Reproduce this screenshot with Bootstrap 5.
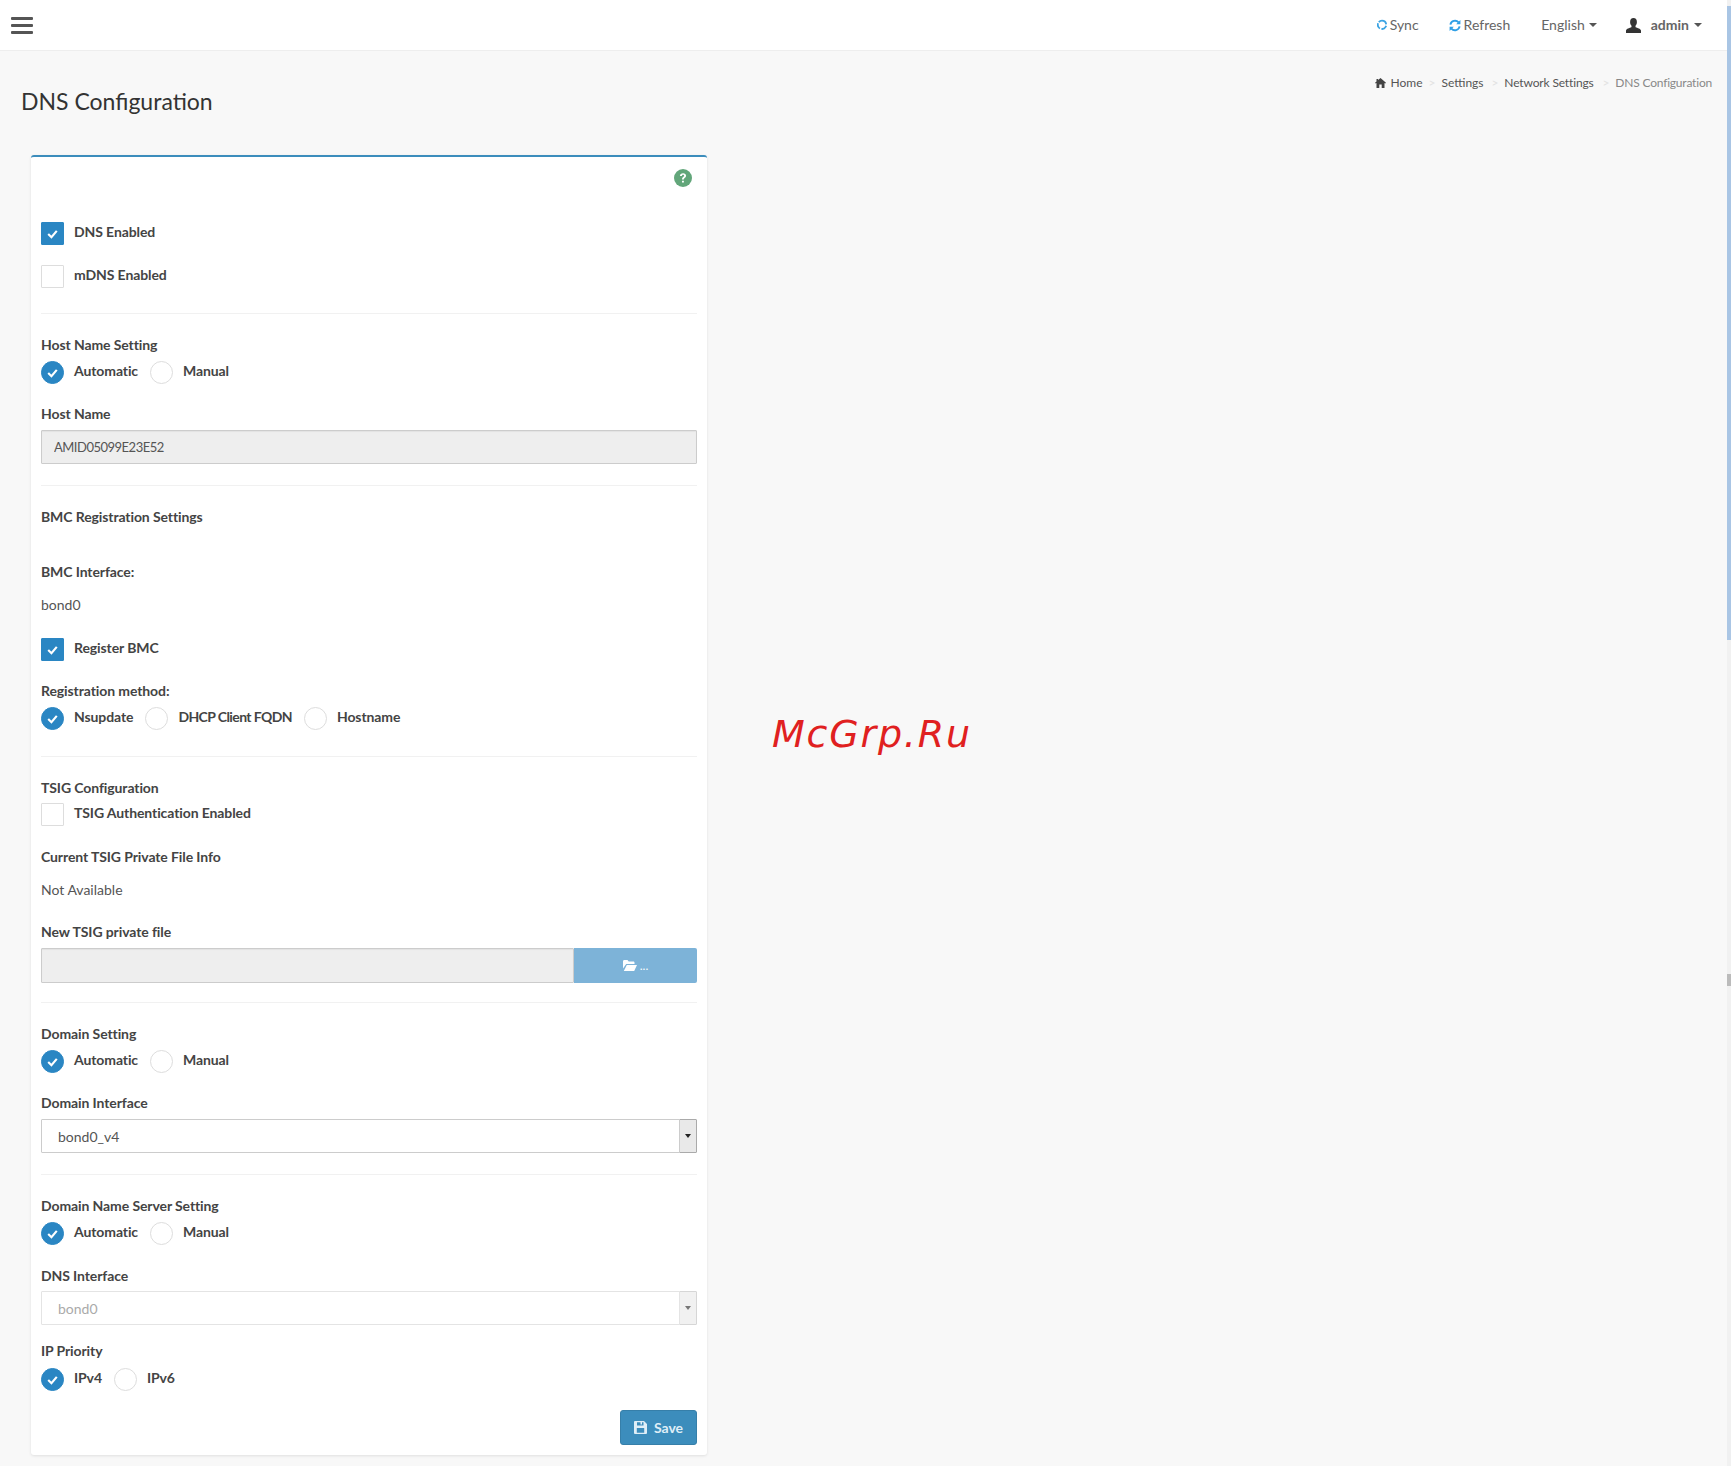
<!DOCTYPE html>
<html lang="en">
<head>
<meta charset="utf-8">
<title>DNS Configuration</title>
<link href="https://cdn.jsdelivr.net/npm/bootstrap@5.3.0/dist/css/bootstrap.min.css" rel="stylesheet">
<style>
html,body{height:1466px;overflow:hidden}
body{background:#f8f8f8;font-family:"Lato","Liberation Sans",sans-serif;font-size:14px;color:#444;line-height:20px;position:relative}
.topbar{height:51px;background:#fff;border-bottom:1px solid #eee;padding:0 29px 0 11px}
.burger{display:flex;flex-direction:column;gap:4px;width:22px;padding:0;border:0;background:none}
.burger i{display:block;height:3px;background:#555;border-radius:1px}
.topitem{color:#666;font-size:14px;text-decoration:none;display:flex;align-items:center;gap:3px;line-height:20px;padding:0}
.topitem.ms1{margin-left:30px}
.topitem.ms2{margin-left:31px}
.topitem.ms3{margin-left:29px;gap:8px;font-weight:700}
.useric{margin-right:2px}
.caretdn{display:inline-block;width:0;height:0;border-left:4px solid transparent;border-right:4px solid transparent;border-top:4px solid #555;margin-left:1px}
.headrow{padding:0 19px 0 21px}
.pagetitle{font-size:23px;line-height:30px;font-weight:400;color:#333;margin:35px 0 0}
.crumbs{--bs-breadcrumb-margin-bottom:0;--bs-breadcrumb-item-padding-x:6px;--bs-breadcrumb-divider:'>';--bs-breadcrumb-divider-color:#e2e2e2;--bs-breadcrumb-item-active-color:#888;font-size:12px;line-height:18px;margin-top:23px}
.crumbs a{color:#555;text-decoration:none}
.crumbs .active{letter-spacing:-.2px;padding-left:9px}
.crumbs .crumbwide{padding-left:8px;letter-spacing:-.15px}
.formcard{width:676px;margin:39px 0 0 31px;border:0;border-top:2px solid #3c8dbc;border-radius:3px;box-shadow:0 1px 3px rgba(0,0,0,.1);background:#fff;padding:10px}
.helprow{height:22px;padding-right:5px}
.flabel{display:block;margin:0;font-weight:700;color:#444;line-height:20px;letter-spacing:-.1px}
.fval{margin:0;color:#555;line-height:20px}
.optrow{display:flex;align-items:flex-start;min-height:23px}
.optrow .form-check-input{flex:none;margin:0;width:23px;height:23px;border:1px solid #ddd;background-color:#fff;box-shadow:none}
.optrow .form-check-input[type=checkbox]{border-radius:1px}
.optrow .form-check-input[type=radio]{border-radius:50%}
.optrow .form-check-input:checked{background-color:#2a86c3;border-color:#2a86c3;background-size:15px 15px;background-position:center;background-image:url("data:image/svg+xml,%3csvg xmlns='http://www.w3.org/2000/svg' viewBox='0 0 14 14'%3e%3cpath fill='none' stroke='%23fff' stroke-width='2' d='M3 7.5l3 3 5-6'/%3e%3c/svg%3e")}
.optrow label{margin:0 12px 0 10px;font-weight:700;color:#444;line-height:20px;letter-spacing:-.1px}
.optrow label.tightcaps{letter-spacing:-.6px}
.sep{margin:0;border:0;border-top:1px solid #f1f1f1;opacity:1}
.gt5{margin-top:5px}.gt6{margin-top:6px}.gt7{margin-top:7px}.gt13{margin-top:13px}.gt16{margin-top:16px}.gt19{margin-top:19px}.gt20{margin-top:20px}.gt21{margin-top:21px}.gt22{margin-top:22px}.gt23{margin-top:23px}.gt25{margin-top:25px}.gt26{margin-top:26px}.gt33{margin-top:33px}.gt35{margin-top:35px}
.hostinput{height:34px;border:1px solid #ccc;border-radius:1px;padding:0 12px;font-size:13px;letter-spacing:-.5px;color:#555;box-shadow:inset 0 1px 1px rgba(0,0,0,.05)}
.hostinput:disabled,.hostinput[readonly]{background:#eee;opacity:1}
.fileinput{height:35px;min-width:0}
.browsebtn{flex:none;width:123px;height:35px;border:0;border-radius:0 2px 2px 0;background:#7db3d8;color:#fff;display:flex;align-items:center;justify-content:center;gap:3px;padding:0;font-size:12px;opacity:1}
.selwrap{height:34px;flex-wrap:nowrap}
.selwrap .form-select{height:34px;border:1px solid #ccc;border-radius:1px 0 0 1px;padding:0 16px;font-size:14px;color:#555;background-image:none;box-shadow:none}
.selwrap .form-select:disabled{background-color:#fff;color:#aaa;border-color:#e4e4e4;opacity:1}
.selarrow{width:18px;flex:none;display:flex;align-items:center;justify-content:center;background:#e9e9e9;border:1px solid #aaa;border-radius:0 1px 1px 0;margin-left:-1px}
.selarrow i{width:0;height:0;border-left:3.5px solid transparent;border-right:3.5px solid transparent;border-top:4px solid #222}
.selarrow.off{border-color:#d6d6d6;background:#f1f1f1}
.selarrow.off i{border-top-color:#777}
.savebtn{--bs-btn-bg:#3c8dbc;--bs-btn-border-color:#367fa9;--bs-btn-color:#dfeef7;width:77px;height:35px;border-radius:3px;font-size:14px;font-weight:700;padding:0;display:flex;align-items:center;justify-content:center;gap:7px}
.wmark{position:absolute;left:772px;top:712px;font-family:"DejaVu Sans",sans-serif;font-style:italic;font-size:38px;line-height:44px;letter-spacing:1.8px;color:#e02020}
.sbtrack{position:absolute;right:0;top:0;width:4px;height:1466px;background:#f1f1f1}
.sbthumb{position:absolute;left:0;top:6px;width:4px;height:634px;background:#a9c5e4}
.sbmark{position:absolute;left:0;top:974px;width:4px;height:12px;background:#bbb}
</style>
</head>
<body>
<nav class="navbar topbar d-flex align-items-center justify-content-between flex-nowrap">
  <button class="burger" type="button" aria-label="Menu"><i></i><i></i><i></i></button>
  <div class="d-flex align-items-center">
    <a class="topitem" href="#"><svg width="10" height="12" viewBox="0 0 10 12"><path d="M5 1.6a4.2 4.2 0 1 1-.01 0" fill="none" stroke="#3aa3e3" stroke-width="1.8" stroke-dasharray="6 1.4"/></svg>Sync</a>
    <a class="topitem ms1" href="#"><svg width="12" height="13" viewBox="0 0 12 13"><path d="M1.4 5.6A4.7 4.7 0 0 1 9.6 3.4M10.6 7.4A4.7 4.7 0 0 1 2.4 9.6" fill="none" stroke="#2f9fe6" stroke-width="1.9"/><path d="M11.4 1v4.2H7.2zM.6 12V7.8h4.2z" fill="#2f9fe6"/></svg>Refresh</a>
    <a class="topitem ms2" href="#">English<span class="caretdn"></span></a>
    <a class="topitem ms3" href="#"><svg class="useric" width="15" height="15" viewBox="0 0 15 15"><path fill="#333" d="M7.5 0c2.2 0 3.4 1.7 3.4 3.9 0 1.6-.6 3-1.4 3.8v1.4c0 .7 5 1.4 5.5 3.3V15H0v-2.6c.5-1.9 5.500-2.600 5.500-3.300V7.700C4.700 6.900 4.100 5.500 4.100 3.900 4.100 1.700 5.300 0 7.500 0z"/></svg><span class="d-flex align-items-center gap-1">admin<span class="caretdn"></span></span></a>
  </div>
</nav>
<main>
  <div class="headrow d-flex justify-content-between align-items-start">
    <h1 class="pagetitle">DNS Configuration</h1>
    <ol class="breadcrumb crumbs">
      <li class="breadcrumb-item"><a href="#" class="d-inline-flex align-items-center gap-1"><svg width="11" height="10" viewBox="0 0 11 10"><path fill="#444" d="M5.500 0 11 4.800l-.7.800-.8-.7V10H6.700V6.600H4.300V10H1.500V4.900l-.8.700L0 4.800 1.500 3.500V1h1.600v1.100z"/></svg> Home</a></li>
      <li class="breadcrumb-item"><a href="#">Settings</a></li>
      <li class="breadcrumb-item crumbwide"><a href="#">Network Settings</a></li>
      <li class="breadcrumb-item active" aria-current="page">DNS Configuration</li>
    </ol>
  </div>
  <form class="card formcard">
    <div class="helprow d-flex justify-content-end align-items-center">
      <svg width="18" height="18" viewBox="0 0 18 18"><circle cx="9" cy="9" r="9" fill="#62a67a"/><path d="M5.900 7c.1-1.800 1.400-2.800 3.200-2.800 1.700 0 3 1 3 2.500 0 2.200-2.300 2.100-2.300 3.800H8c0-2.500 2.100-2.500 2.100-3.700 0-.6-.4-1-1-1-.7 0-1.100.5-1.200 1.200zM8 11.700h1.900v1.900H8z" fill="#fff"/></svg>
    </div>

    <div class="optrow gt33"><input class="form-check-input" type="checkbox" id="c1" checked><label for="c1">DNS Enabled</label></div>
    <div class="optrow gt20"><input class="form-check-input" type="checkbox" id="c2"><label for="c2">mDNS Enabled</label></div>
    <hr class="sep gt25">

    <span class="flabel gt21">Host Name Setting</span>
    <div class="optrow gt6"><input class="form-check-input" type="radio" name="r1" id="r11" checked><label for="r11">Automatic</label><input class="form-check-input" type="radio" name="r1" id="r12"><label for="r12">Manual</label></div>
    <label class="flabel gt20" for="hn">Host Name</label>
    <input class="form-control hostinput gt6" id="hn" value="AMID05099E23E52" disabled>
    <hr class="sep gt21">

    <span class="flabel gt21">BMC Registration Settings</span>
    <span class="flabel gt35">BMC Interface:</span>
    <p class="fval gt13">bond0</p>
    <div class="optrow gt23"><input class="form-check-input" type="checkbox" id="c3" checked><label for="c3">Register BMC</label></div>
    <span class="flabel gt20">Registration method:</span>
    <div class="optrow gt6"><input class="form-check-input" type="radio" name="r2" id="r21" checked><label for="r21">Nsupdate</label><input class="form-check-input" type="radio" name="r2" id="r22"><label class="tightcaps" for="r22">DHCP Client FQDN</label><input class="form-check-input" type="radio" name="r2" id="r23"><label for="r23">Hostname</label></div>
    <hr class="sep gt26">

    <span class="flabel gt21">TSIG Configuration</span>
    <div class="optrow gt5"><input class="form-check-input" type="checkbox" id="c4"><label for="c4">TSIG Authentication Enabled</label></div>
    <span class="flabel gt21">Current TSIG Private File Info</span>
    <p class="fval gt13">Not Available</p>
    <span class="flabel gt22">New TSIG private file</span>
    <div class="d-flex gt6">
      <input class="form-control hostinput fileinput flex-grow-1" readonly aria-label="New TSIG private file">
      <button class="browsebtn" type="button" disabled><svg width="14" height="11" viewBox="0 0 14 11"><path fill="#fff" d="M0 1.500C0 .700.500 0 1.300 0h3.200l1.200 1.400h4.600c.7 0 1.200.5 1.200 1.200V4H3.200L0 8.500zM3.800 5H14l-2.800 6H.8z"/></svg>...</button>
    </div>
    <hr class="sep gt19">

    <span class="flabel gt21">Domain Setting</span>
    <div class="optrow gt6"><input class="form-check-input" type="radio" name="r3" id="r31" checked><label for="r31">Automatic</label><input class="form-check-input" type="radio" name="r3" id="r32"><label for="r32">Manual</label></div>
    <label class="flabel gt20" for="s1">Domain Interface</label>
    <div class="input-group selwrap gt6">
      <select class="form-select" id="s1"><option>bond0_v4</option></select>
      <span class="selarrow"><i></i></span>
    </div>
    <hr class="sep gt21">

    <span class="flabel gt21">Domain Name Server Setting</span>
    <div class="optrow gt6"><input class="form-check-input" type="radio" name="r4" id="r41" checked><label for="r41">Automatic</label><input class="form-check-input" type="radio" name="r4" id="r42"><label for="r42">Manual</label></div>
    <label class="flabel gt21" for="s2">DNS Interface</label>
    <div class="input-group selwrap gt5">
      <select class="form-select" id="s2" disabled><option>bond0</option></select>
      <span class="selarrow off"><i></i></span>
    </div>
    <span class="flabel gt16">IP Priority</span>
    <div class="optrow gt7"><input class="form-check-input" type="radio" name="r5" id="r51" checked><label for="r51">IPv4</label><input class="form-check-input" type="radio" name="r5" id="r52"><label for="r52">IPv6</label></div>

    <div class="d-flex justify-content-end gt19">
      <button class="btn savebtn" type="button"><svg width="13" height="13" viewBox="0 0 13 13"><path fill="#dfeef7" fill-rule="evenodd" d="M1 0h9l3 3v9a1 1 0 0 1-1 1H1a1 1 0 0 1-1-1V1a1 1 0 0 1 1-1zm2 1.200v3.300h6.500V1.200H8v2.300H6.500V1.200zM2.800 7v4.800h7.400V7z"/></svg>Save</button>
    </div>
  </form>
</main>
<div class="wmark">McGrp.Ru</div>
<div class="sbtrack" aria-hidden="true"><div class="sbthumb"></div><div class="sbmark"></div></div>
<script src="https://cdn.jsdelivr.net/npm/bootstrap@5.3.0/dist/js/bootstrap.bundle.min.js"></script>
</body>
</html>
